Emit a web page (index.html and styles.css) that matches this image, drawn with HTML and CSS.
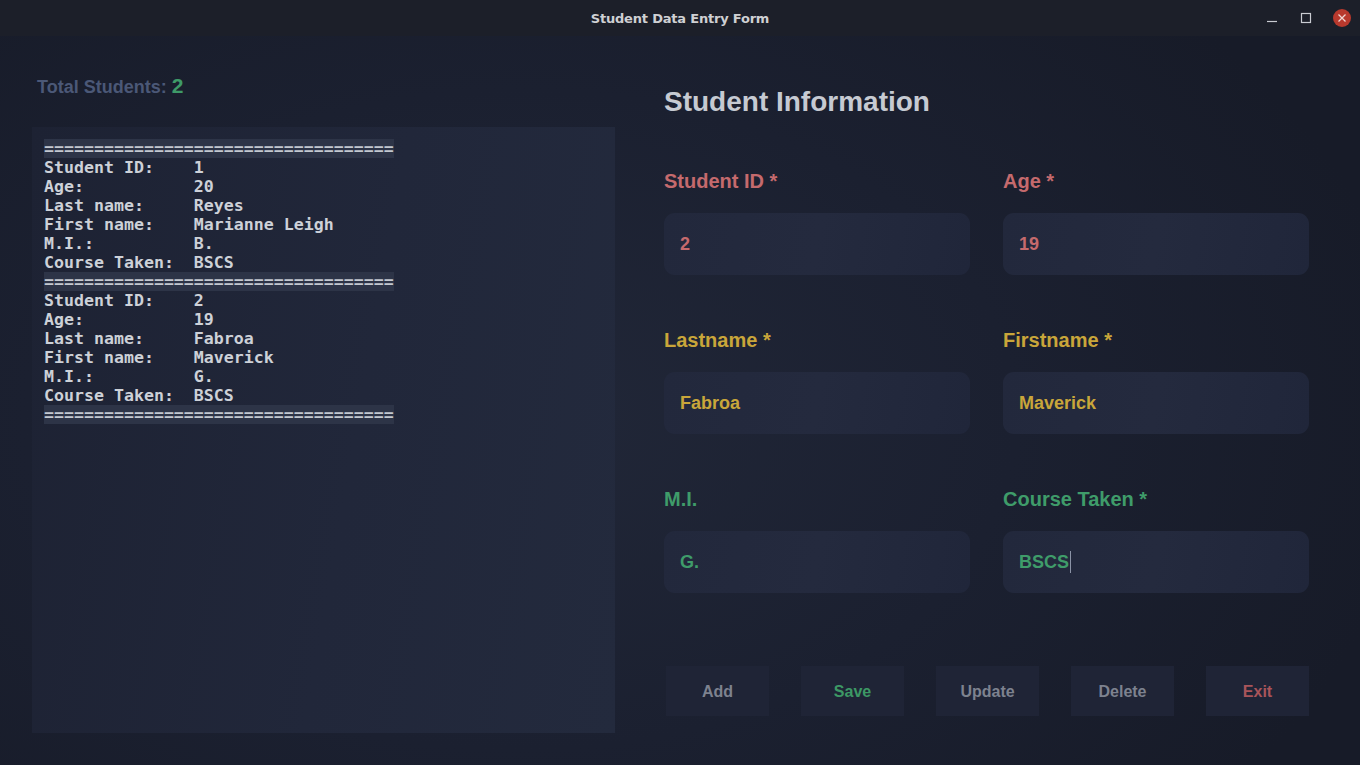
FILE: index.html
```html
<!DOCTYPE html>
<html>
<head>
<meta charset="utf-8">
<title>Student Data Entry Form</title>
<link rel="stylesheet" href="styles.css">
</head>
<body>
<div class="window">
  <header class="titlebar">
    <div class="title">Student Data Entry Form</div>
    <div class="controls">
      <span class="ctl min"><svg width="12" height="12" viewBox="0 0 12 12"><line x1="1" y1="9.5" x2="11" y2="9.5" stroke="#c9ccd2" stroke-width="1.2"/></svg></span>
      <span class="ctl max"><svg width="12" height="12" viewBox="0 0 12 12"><rect x="1.5" y="1.5" width="9" height="9" fill="none" stroke="#c9ccd2" stroke-width="1.2"/></svg></span>
      <span class="ctl close"><svg width="18" height="18" viewBox="0 0 18 18"><circle cx="9" cy="9" r="9" fill="#b8392d"/><path d="M5.5 5.5 L12.5 12.5 M12.5 5.5 L5.5 12.5" stroke="#f1d6d2" stroke-width="1.3"/></svg></span>
    </div>
  </header>
  <main class="content">
    <section class="left">
      <div class="total">Total Students: <span class="count">2</span></div>
      <div class="records"><pre class="log"><span class="sep">===================================</span>
Student ID:    1
Age:           20
Last name:     Reyes
First name:    Marianne Leigh
M.I.:          B.
Course Taken:  BSCS
<span class="sep">===================================</span>
Student ID:    2
Age:           19
Last name:     Fabroa
First name:    Maverick
M.I.:          G.
Course Taken:  BSCS
<span class="sep">===================================</span></pre></div>
    </section>
    <section class="right">
      <h1 class="heading">Student Information</h1>
      <div class="form">
        <div class="field red">
          <label>Student ID *</label>
          <div class="input">2</div>
        </div>
        <div class="field red">
          <label>Age *</label>
          <div class="input">19</div>
        </div>
        <div class="field yellow">
          <label>Lastname *</label>
          <div class="input">Fabroa</div>
        </div>
        <div class="field yellow">
          <label>Firstname *</label>
          <div class="input">Maverick</div>
        </div>
        <div class="field green">
          <label>M.I.</label>
          <div class="input">G.</div>
        </div>
        <div class="field green">
          <label>Course Taken *</label>
          <div class="input">BSCS<span class="caret"></span></div>
        </div>
      </div>
      <div class="buttons">
        <button class="btn">Add</button>
        <button class="btn save">Save</button>
        <button class="btn">Update</button>
        <button class="btn">Delete</button>
        <button class="btn exit">Exit</button>
      </div>
    </section>
  </main>
</div>
</body>
</html>
```

FILE: styles.css
```css
* { box-sizing: border-box; }
html, body { margin: 0; padding: 0; }
body {
  width: 1360px;
  height: 765px;
  overflow: hidden;
  background: #191d2a;
  font-family: "Liberation Sans", Arial, sans-serif;
}
.window {
  width: 1360px;
  height: 765px;
  display: flex;
  flex-direction: column;
  background: radial-gradient(ellipse 900px 600px at 520px 420px, #212738 0%, #1b2030 55%, #171b28 100%);
}
.titlebar {
  height: 36px;
  flex: none;
  background: #1c1f29;
  display: flex;
  align-items: center;
  justify-content: center;
  position: relative;
}
.title {
  color: #cfd0d3;
  font-family: "DejaVu Sans", sans-serif;
  font-weight: bold;
  font-size: 13px;
  letter-spacing: -0.2px;
}
.controls {
  position: absolute;
  right: 9px;
  top: 9px;
  display: flex;
  align-items: center;
}
.ctl { display: flex; align-items: center; justify-content: center; }
.ctl.min { width: 12px; height: 18px; margin-right: 22px; }
.ctl.max { width: 12px; height: 18px; margin-right: 21px; }
.ctl.close { width: 18px; height: 18px; }

.content {
  flex: 1;
  display: flex;
  padding: 0 0 0 32px;
  gap: 49px;
}
.left {
  width: 583px;
  display: flex;
  flex-direction: column;
  padding-top: 38px;
}
.total {
  height: 24px;
  line-height: 24px;
  font-weight: bold;
  font-size: 18px;
  color: #4b5877;
  padding-left: 5px;
}
.count {
  color: #3e9a68;
  font-size: 21px;
}
.records {
  margin-top: 29px;
  height: 606px;
  background: linear-gradient(100deg, #1d2233 0%, #21273a 55%, #232a3d 100%);
  padding: 12px 12px;
}
.log {
  margin: 0;
  font-family: "DejaVu Sans Mono", monospace;
  font-size: 16.6px;
  font-weight: bold;
  line-height: 19px;
  color: #cdd1d8;
}
.sep {
  background: #2d3447;
  color: #c3c8d0;
}

.right {
  width: 645px;
  padding-top: 50px;
  display: flex;
  flex-direction: column;
}
.heading {
  margin: 0;
  height: 32px;
  line-height: 32px;
  font-size: 28px;
  font-weight: bold;
  color: #c6cad2;
}
.form {
  margin-top: 51px;
  display: grid;
  grid-template-columns: 306px 306px;
  column-gap: 33px;
  row-gap: 53px;
}
.field label {
  display: block;
  height: 24px;
  line-height: 24px;
  font-size: 20px;
  font-weight: bold;
}
.field .input {
  margin-top: 20px;
  height: 62px;
  border-radius: 11px;
  background: linear-gradient(100deg, #22283c 0%, #242a3e 50%, #20263a 100%);
  padding-left: 16px;
  display: flex;
  align-items: center;
  font-size: 18px;
  font-weight: bold;
}
.red { color: #c56a6d; }
.yellow { color: #c9a63a; }
.green { color: #3f9c6a; }
.caret {
  display: inline-block;
  width: 1px;
  height: 22px;
  background: #8b93a6;
  margin-left: 1px;
}
.buttons {
  margin-top: 73px;
  display: flex;
  gap: 32px;
  padding-left: 2px;
}
.btn {
  width: 103px;
  height: 50px;
  border: none;
  background: #1f2436;
  font-family: "Liberation Sans", Arial, sans-serif;
  font-size: 16px;
  font-weight: bold;
  color: #7d828f;
  padding: 0;
  padding-top: 1px;
}
.btn.save { color: #3d9865; }
.btn.exit { color: #a8545a; }
```
